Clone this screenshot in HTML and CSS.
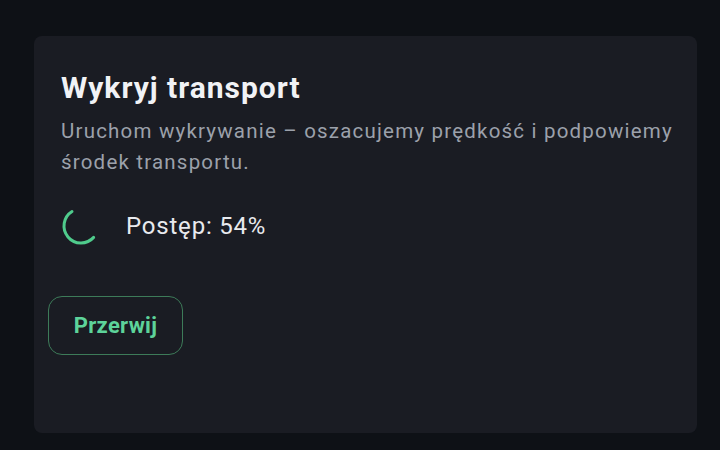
FILE: index.html
```html
<!DOCTYPE html>
<html lang="pl">
<head>
<meta charset="utf-8">
<title>Wykryj transport</title>
<link rel="stylesheet" href="styles.css">
</head>
<body>
<main class="page">
  <section class="card">
    <h1 class="title">Wykryj transport</h1>
    <p class="desc">Uruchom wykrywanie – oszacujemy prędkość i podpowiemy środek transportu.</p>
    <div class="progress">
      <svg class="spinner" width="40" height="40" viewBox="0 0 40 40" aria-hidden="true">
        <path d="M10.99 5.58 A17 17 0 1 0 32.63 31.38" fill="none" stroke="#4fcb8c" stroke-width="3" stroke-linecap="round"/>
      </svg>
      <span class="progress-label">Postęp: 54%</span>
    </div>
    <button class="btn" type="button">Przerwij</button>
  </section>
</main>
</body>
</html>
```
FILE: styles.css
```css
html, body {
  margin: 0;
  padding: 0;
  background: #0e1116;
}
body {
  font-family: Roboto, "Noto Sans", sans-serif;
  width: 720px;
  height: 450px;
  overflow: hidden;
}
.page {
  padding: 36px 23px 0 34px;
}
.card {
  box-sizing: border-box;
  height: 397px;
  background: #1a1c23;
  border-radius: 8px;
  padding: 34px 24px 0 27px;
  display: flex;
  flex-direction: column;
  align-items: flex-start;
}
.title {
  margin: 0;
  font-size: 30px;
  font-weight: 700;
  line-height: 36px;
  letter-spacing: 1px;
  color: #f1f2f5;
}
.desc {
  margin: 10px 0 0;
  font-size: 20.5px;
  line-height: 31px;
  letter-spacing: 1.2px;
  color: #9ca1ab;
}
.progress {
  display: flex;
  align-items: center;
  gap: 25px;
  margin-top: 28px;
}
.spinner {
  display: block;
}
.progress-label {
  font-size: 24px;
  letter-spacing: 0.8px;
  color: #e8eaee;
}
.btn {
  margin-top: 50px;
  margin-left: -13px;
  box-sizing: border-box;
  width: 135px;
  height: 59px;
  border: 1.5px solid #3d7b59;
  border-radius: 14px;
  background: transparent;
  color: #5dd39a;
  font-family: Roboto, "Noto Sans", sans-serif;
  font-size: 22px;
  font-weight: 700;
  letter-spacing: 0.3px;
  padding: 0;
}
```
